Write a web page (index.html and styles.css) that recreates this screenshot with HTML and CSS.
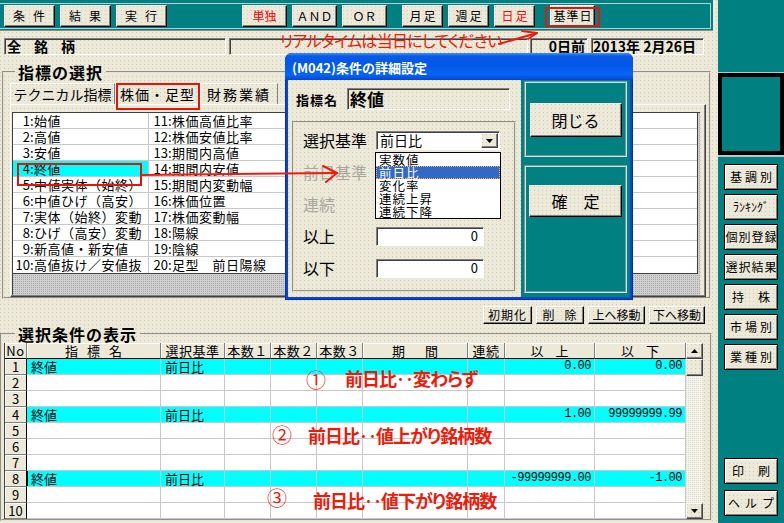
FILE: index.html
```html
<!DOCTYPE html>
<html lang="ja">
<head>
<meta charset="utf-8">
<title>条件の詳細設定</title>
<link rel="stylesheet" href="styles.css">
</head>
<body>
<div class="app">
  <div class="main tex">
    <div class="toolbar">
      <div class="tb-inner">
        <button class="btn tex tb">条件</button>
        <button class="btn tex tb">結果</button>
        <button class="btn tex tb">実行</button>
        <button class="btn tex tb2 red ml-a">単独</button>
        <button class="btn tex tb2">ＡＮＤ</button>
        <button class="btn tex tb2">ＯＲ</button>
        <button class="btn tex tb3 ml-b">月足</button>
        <button class="btn tex tb3">週足</button>
        <button class="btn tex tb3 red">日足</button>
        <button class="btn tex tb4 ml-c kijun">基準日</button>
      </div>
    </div>
    <div class="inforow">
      <div class="field f-all">全銘柄</div>
      <div class="field f-blank"></div>
      <div class="field f-days">0日前</div>
      <div class="field f-date">2013年 2月26日</div>
    </div>
    <fieldset class="grp grp1">
      <legend>指標の選択</legend>
      <div class="tabs">
        <div class="tab t1">テクニカル指標</div>
        <div class="tab t2">株価・足型</div>
        <div class="tab t3">財務業績</div>
      </div>
      <div class="tabpanel">
        <div class="listbox hatch">
          <div class="lrows">
            <div class="lrow"><div class="lc"><span class="n">1</span>:始値</div><div class="lc c2"><span class="n">11</span>:株価高値比率</div><div class="lc c3"></div></div>
            <div class="lrow"><div class="lc"><span class="n">2</span>:高値</div><div class="lc c2"><span class="n">12</span>:株価安値比率</div><div class="lc c3"></div></div>
            <div class="lrow"><div class="lc"><span class="n">3</span>:安値</div><div class="lc c2"><span class="n">13</span>:期間内高値</div><div class="lc c3"></div></div>
            <div class="lrow"><div class="lc sel"><span class="n">4</span>:終値</div><div class="lc c2"><span class="n">14</span>:期間内安値</div><div class="lc c3"></div></div>
            <div class="lrow"><div class="lc"><span class="n">5</span>:中値実体（始終）</div><div class="lc c2"><span class="n">15</span>:期間内変動幅</div><div class="lc c3"></div></div>
            <div class="lrow"><div class="lc"><span class="n">6</span>:中値ひげ（高安）</div><div class="lc c2"><span class="n">16</span>:株価位置</div><div class="lc c3"></div></div>
            <div class="lrow"><div class="lc"><span class="n">7</span>:実体（始終）変動</div><div class="lc c2"><span class="n">17</span>:株価変動幅</div><div class="lc c3"></div></div>
            <div class="lrow"><div class="lc"><span class="n">8</span>:ひげ（高安）変動</div><div class="lc c2"><span class="n">18</span>:陽線</div><div class="lc c3"></div></div>
            <div class="lrow"><div class="lc"><span class="n">9</span>:新高値・新安値</div><div class="lc c2"><span class="n">19</span>:陰線</div><div class="lc c3"></div></div>
            <div class="lrow"><div class="lc"><span class="n">10</span>:高値抜け／安値抜</div><div class="lc c2"><span class="n">20</span>:足型　前日陽線</div><div class="lc c3"></div></div>
          </div>
        </div>
      </div>
    </fieldset>
    <div class="btnrow">
      <button class="btn tex rb w1">初期化</button>
      <button class="btn tex rb w2">削除</button>
      <button class="btn tex rb w3">上へ移動</button>
      <button class="btn tex rb w4">下へ移動</button>
    </div>
    <fieldset class="grp grp2">
      <legend>選択条件の表示</legend>
      <div class="tablewrap">
        <div class="tbl">
          <div class="tr th">
            <div class="tex">No</div><div class="tex sp8">指標名</div><div class="tex">選択基準</div><div class="tex">本数１</div><div class="tex">本数２</div><div class="tex">本数３</div><div class="tex sp16">期間</div><div class="tex">連続</div><div class="tex sp12">以上</div><div class="tex sp12">以下</div>
          </div>
          <div class="tr cy"><div class="no tex">1</div><div>終値</div><div>前日比</div><div></div><div></div><div></div><div></div><div></div><div class="num">0.00</div><div class="num">0.00</div></div>
          <div class="tr"><div class="no tex">2</div><div></div><div></div><div></div><div></div><div></div><div></div><div></div><div></div><div></div></div>
          <div class="tr"><div class="no tex">3</div><div></div><div></div><div></div><div></div><div></div><div></div><div></div><div></div><div></div></div>
          <div class="tr cy"><div class="no tex">4</div><div>終値</div><div>前日比</div><div></div><div></div><div></div><div></div><div></div><div class="num">1.00</div><div class="num">99999999.99</div></div>
          <div class="tr"><div class="no tex">5</div><div></div><div></div><div></div><div></div><div></div><div></div><div></div><div></div><div></div></div>
          <div class="tr"><div class="no tex">6</div><div></div><div></div><div></div><div></div><div></div><div></div><div></div><div></div><div></div></div>
          <div class="tr"><div class="no tex">7</div><div></div><div></div><div></div><div></div><div></div><div></div><div></div><div></div><div></div></div>
          <div class="tr cy"><div class="no tex">8</div><div class="cur">終値</div><div>前日比</div><div></div><div></div><div></div><div></div><div></div><div class="num">-99999999.00</div><div class="num">-1.00</div></div>
          <div class="tr"><div class="no tex">9</div><div></div><div></div><div></div><div></div><div></div><div></div><div></div><div></div><div></div></div>
          <div class="tr"><div class="no tex">10</div><div></div><div></div><div></div><div></div><div></div><div></div><div></div><div></div><div></div></div>
        </div>
        <div class="vscroll">
          <div class="sbb tex"><svg width="7" height="4" viewBox="0 0 7 4"><polygon points="3.5,0 7,4 0,4" fill="#000"/></svg></div>
          <div class="sbthumb tex"></div>
          <div class="sbtrack"></div>
          <div class="sbb tex"><svg width="7" height="4" viewBox="0 0 7 4"><polygon points="0,0 7,0 3.5,4" fill="#000"/></svg></div>
        </div>
      </div>
    </fieldset>
  </div>

  <div class="side">
    <div class="side-top"></div>
    <div class="blackbox"></div>
    <div class="side-line"></div>
    <div class="side-btns">
      <button class="btn tex sbtn s3">基調別</button>
      <button class="btn tex sbtn sk">ﾗﾝｷﾝｸﾞ</button>
      <button class="btn tex sbtn s4">個別登録</button>
      <button class="btn tex sbtn s4">選択結果</button>
      <button class="btn tex sbtn s2">持株</button>
      <button class="btn tex sbtn s3">市場別</button>
      <button class="btn tex sbtn s3">業種別</button>
      <button class="btn tex sbtn s2 push">印刷</button>
      <button class="btn tex sbtn s3 last">ヘルプ</button>
    </div>
  </div>

  <div class="dialog">
    <div class="dtitle">(M042)条件の詳細設定</div>
    <div class="dbody">
      <div class="dleft tex">
        <div class="namerow">
          <span class="namelbl">指標名</span>
          <div class="namefield">終値</div>
        </div>
        <div class="dgroup">
          <span class="dl">選択基準</span>
          <div class="select"><span class="seltext">前日比</span><span class="ddbtn tex"><svg width="7" height="4" viewBox="0 0 7 4"><polygon points="0,0 7,0 3.5,4" fill="#000"/></svg></span></div>
          <span class="dl dis">前日基準</span><span></span>
          <span class="dl dis">連続</span><span></span>
          <span class="dl">以上</span><div class="numin">0</div>
          <span class="dl">以下</span><div class="numin">0</div>
        </div>
      </div>
      <div class="dright">
        <div class="frame f1"><button class="btn tex bigbtn b1">閉じる</button></div>
        <div class="frame f2"><button class="btn tex bigbtn b2">確定</button></div>
      </div>
    </div>
    <ul class="ddlist">
      <li>実数値</li>
      <li class="on">前日比</li>
      <li>変化率</li>
      <li>連続上昇</li>
      <li>連続下降</li>
    </ul>
  </div>

  <div class="note">リアルタイムは当日にしてください</div>
  <div class="circ c1">①</div><div class="ann a1">前日比‥変わらず</div>
  <div class="circ c2n">②</div><div class="ann a2">前日比‥値上がり銘柄数</div>
  <div class="circ c3n">③</div><div class="ann a3">前日比‥値下がり銘柄数</div>

  <svg class="arrows" width="784" height="523" viewBox="0 0 784 523">
    <g stroke="#ee1c0e" stroke-width="2" fill="none" stroke-linecap="round" stroke-linejoin="round">
      <line x1="499" y1="44" x2="537" y2="33"/>
      <polyline points="522,31 537,33 528,39"/>
      <line x1="142" y1="175" x2="337" y2="173"/>
      <polyline points="323,166 337,173 326,182"/>
    </g>
  </svg>
</div>
</body>
</html>
```

FILE: styles.css
```css
* { box-sizing: border-box; }
html, body { margin: 0; padding: 0; }
body {
  width: 784px; height: 523px; overflow: hidden;
  font-family: "Noto Sans CJK JP", "Noto Sans", sans-serif;
  font-size: 13px; color: #000; background: #ece9d8;
}
.tex {
  background-color: #ece9d8;
  background-image: conic-gradient(at 1px 1px, transparent 75%, #cfcbb8 0);
  background-size: 4px 4px;
}
.hatch {
  background-color: #d0d0d0;
  background-image: conic-gradient(at 1px 1px, transparent 75%, #a8a8a8 0);
  background-size: 2px 2px;
}
.app { position: relative; display: flex; width: 784px; height: 523px; overflow: hidden; }
.main { width: 718px; height: 523px; display: flex; flex-direction: column; flex: none; }

/* toolbar */
.toolbar { width: 713px; height: 31px; flex: none; background: #008080; padding-top: 3px; border-bottom: 1px solid #8c8c8c; }
.tb-inner { width: 711px; height: 26px; border: 1px solid #b4d2d2; border-left: 0; display: flex; align-items: flex-start; gap: 5px; padding: 1px 0 0 4px; }
.btn {
  font-family: inherit; font-size: 12px; line-height: 1; color: #000;
  border: 1px solid; border-color: #fff #000 #000 #fff;
  box-shadow: inset -1px -1px 0 #808080;
  display: flex; align-items: center; justify-content: center;
  padding: 0; margin: 0; white-space: nowrap; flex: none;
}
.red { color: #f00; }
.tb { width: 51px; height: 22px; letter-spacing: 8px; padding-left: 7px; }
.tb2 { width: 45px; height: 22px; }
.tb3 { width: 41px; height: 22px; letter-spacing: 2px; padding-left: 2px; }
.tb4 { width: 45px; height: 22px; letter-spacing: 1px; padding-left: 1px; }
.ml-a { margin-left: 70px; }
.ml-b { margin-left: 10px; }
.ml-c { margin-left: 10px; }
.kijun { position: relative; }
.kijun::after { content: ""; position: absolute; left: -6px; right: -6px; top: 1px; bottom: -1px; border: 2px solid #e8140a; }

/* info row */
.inforow { height: 29px; flex: none; display: flex; padding: 7px 0 0 4px; }
.field {
  height: 17px; border: 1px solid; border-color: #808080 #fff #fff #808080;
  box-shadow: inset 1px 1px 0 #404040;
  font-weight: 700; font-size: 14px; line-height: 15px; white-space: nowrap;
}
.f-all { width: 222px; padding-left: 2px; letter-spacing: 13px; }
.f-blank { width: 299px; margin-left: 3px; }
.f-days { width: 58px; margin-left: 2px; text-align: right; padding-right: 2px; }
.f-date { width: 113px; margin-left: 3px; padding-left: 1px; }

/* group boxes */
.grp { border: 2px groove #e6e3d4; margin: 0; padding: 0; min-width: 0; flex: none; }
.grp legend { font-size: 16px; font-weight: 700; letter-spacing: 1px; padding: 0 3px; }
.grp1 { margin: 2px 0 0 2px; width: 709px; padding: 0 0 0 6px; }
.grp1 legend { line-height: 20px; margin-left: 5px; }

.tabs { display: flex; height: 21px; margin-top: 1px; }
.tab {
  height: 21px; font-size: 14px; line-height: 20px; text-align: center; white-space: nowrap;
  border-top: 1px solid #fff; border-left: 1px solid #fff; border-right: 1px solid #808080;
}
.t1 { width: 105px; }
.t2 { width: 85px; position: relative; letter-spacing: 1px; }
.t3 { width: 78px; letter-spacing: 2px; }
.t2::after { content: ""; position: absolute; left: 0; top: -1px; right: -1px; bottom: -6px; border: 2px solid #e8140a; }

.tabpanel {
  width: 696px; height: 193px; border: 1px solid; border-color: #fff #404040 #404040 #fff;
  box-shadow: inset -1px -1px 0 #808080; padding: 7px 0 0 1px;
}
.listbox { width: 688px; height: 183px; border-left: 1px solid #404040; border-top: 1px solid #404040; }
.lrows { width: 685px; height: 161px; background: #fff; border-right: 1px solid #404040; border-bottom: 1px solid #404040; }
.lrow { display: grid; grid-template-columns: 136px 139px 1fr; height: 16px; border-bottom: 1px solid #c8c8c8; }
.lrow:last-child { border-bottom: 0; height: 16px; }
.lc { font-size: 13px; letter-spacing: 0.5px; line-height: 15px; white-space: nowrap; padding-left: 2px; border-right: 1px solid #c8c8c8; }
.lc.c2 { padding-left: 4px; }
.lc.c3 { border-right: 0; }
.n { display: inline-block; width: 15px; text-align: right; letter-spacing: 0; }
.lc.sel { background: #0ff; position: relative; }
.lc.sel::after { content: ""; position: absolute; left: 4px; top: 2px; width: 121px; height: 19px; border: 2px solid #e8140a; }

/* button row */
.btnrow { height: 27px; flex: none; display: flex; justify-content: flex-end; gap: 4px; padding: 7px 13px 0 0; }
.rb { height: 18px; font-size: 12px; }
.w1 { width: 49px; letter-spacing: 1px; }
.w2 { width: 48px; letter-spacing: 10px; padding-left: 9px; }
.w3 { width: 57px; }
.w4 { width: 56px; }

/* lower group */
.grp2 { width: 712px; padding: 1px 0 0 2px; }
.grp2 legend { line-height: 16px; margin-left: 11px; }
.tablewrap { display: flex; width: 699px; height: 176px; }
.tbl { width: 682px; border-left: 1px solid #404040; }
.tr { display: grid; grid-template-columns: 22px 134px 64px 46px 46px 46px 105px 37px 90px 91px; height: 16px; }
.tr > div {
  border-right: 1px solid #c8c8c8; border-bottom: 1px solid #c8c8c8;
  font-size: 13px; line-height: 15px; padding: 0 4px; white-space: nowrap; background: #fff;
}
.tr.cy > div { background: #0ff; }
.tr > div.no {
  text-align: center; padding: 0; border-right: 1px solid #000; border-bottom: 1px solid #808080;
  box-shadow: inset 1px 1px 0 #fff; background-color: #ece9d8;
}
.tr.th > div {
  text-align: center; padding: 0; border-right: 1px solid #808080; border-bottom: 1px solid #000;
  box-shadow: inset 1px 1px 0 #fff; background-color: #ece9d8; letter-spacing: 0.5px;
}
.tr.th > div.sp8 { letter-spacing: 9px; padding-left: 9px; }
.tr.th > div.sp16 { letter-spacing: 20px; padding-left: 20px; }
.tr.th > div.sp12 { letter-spacing: 12px; padding-left: 12px; }
.tr > div.num { text-align: right; font-family: "Liberation Mono", monospace; font-size: 12px; letter-spacing: -0.5px; padding-right: 3px; }
.tr > div.cur { box-shadow: inset 1px 0 0 #000; }

.vscroll { width: 17px; height: 176px; display: flex; flex-direction: column; }
.sbb {
  height: 16px; flex: none; display: flex; align-items: center; justify-content: center;
  border: 1px solid; border-color: #fff #404040 #404040 #fff; box-shadow: inset -1px -1px 0 #808080;
}
.sbthumb { height: 17px; flex: none; border: 1px solid; border-color: #fff #404040 #404040 #fff; box-shadow: inset -1px -1px 0 #808080; }
.sbtrack {
  flex: 1; background-color: #f4f3ec;
  background-image: conic-gradient(at 1px 1px, transparent 75%, #dcd9c8 0); background-size: 2px 2px;
}

/* side */
.side { width: 66px; height: 523px; background: #008080; display: flex; flex-direction: column; flex: none; }
.side-top { height: 73px; flex: none; border-bottom: 1px solid #b8c8c8; }
.blackbox { height: 82px; flex: none; border: 4px solid #000; background: #008080; }
.side-line { height: 2px; flex: none; background: #c4c4c4; }
.side-btns { flex: 1; display: flex; flex-direction: column; gap: 4px; padding: 7px 0 7px 6px; }
.sbtn {
  width: 54px; height: 26px; font-size: 12px;
  border: 1px solid #000; box-shadow: inset 1px 1px 0 #fff, inset -1px -1px 0 #808080;
}
.s3 { letter-spacing: 3px; padding-left: 3px; }
.s4 { letter-spacing: 1px; padding-left: 1px; }
.s2 { letter-spacing: 14px; padding-left: 14px; }
.sk { letter-spacing: 0; }
.push { margin-top: auto; }
.last { margin-top: 2px; letter-spacing: 5px; padding-left: 5px; }

/* dialog */
.dialog {
  position: absolute; left: 285px; top: 53px; width: 348px; height: 247px;
  background: #0845d2; border-radius: 7px 7px 0 0; padding: 0 3px 3px;
  display: flex; flex-direction: column;
  box-shadow: inset 1px 0 0 #0031a8, inset -1px 0 0 #0031a8, inset 0 -1px 0 #0031a8;
}
.dtitle {
  height: 27px; flex: none; margin: 0 -3px; padding: 7px 0 0 7px; border-radius: 7px 7px 0 0;
  background: linear-gradient(180deg, #3d95ff 0, #0a5ae6 3px, #0057e8 45%, #0866f4 80%, #0346d6 100%);
  color: #fff; font-weight: 700; font-size: 13px; line-height: 15px; white-space: nowrap;
}
.dbody { flex: 1; display: flex; }
.dleft { width: 233px; flex: none; }
.namerow { display: flex; align-items: center; height: 30px; padding: 8px 0 0 8px; }
.namelbl { width: 51px; flex: none; font-weight: 700; font-size: 13px; letter-spacing: 1px; }
.namefield {
  width: 163px; height: 22px; border: 1px solid; border-color: #808080 #fff #fff #808080;
  box-shadow: inset 1px 1px 0 #404040; font-weight: 700; font-size: 17px; line-height: 20px; padding-left: 2px;
}
.dgroup {
  margin: 11px 0 0 4px; width: 224px; height: 171px; border: 2px groove #e6e3d4;
  display: grid; grid-template-columns: 73px 124px; grid-auto-rows: 19px; row-gap: 13px;
  padding: 8px 0 0 9px; align-items: center;
}
.dl { font-size: 16px; line-height: 19px; white-space: nowrap; }
.dis { color: #a9a79c; }
.select {
  width: 124px; height: 19px; background: #fff; border: 1px solid; border-color: #808080 #fff #fff #808080;
  box-shadow: inset 1px 1px 0 #404040; display: flex; align-items: center; padding: 1px 1px 1px 3px;
}
.seltext { font-size: 14px; line-height: 15px; flex: 1; }
.ddbtn {
  width: 17px; height: 15px; display: flex; align-items: center; justify-content: center;
  border: 1px solid; border-color: #fff #404040 #404040 #fff; box-shadow: inset -1px -1px 0 #808080;
}
.numin {
  width: 108px; height: 19px; background: #fff; border: 1px solid; border-color: #808080 #fff #fff #808080;
  box-shadow: inset 1px 1px 0 #404040; text-align: right; padding-right: 5px; font-size: 13px; line-height: 16px;
}
.dright { width: 109px; flex: none; background: #008080; padding: 1px 3px 0; display: flex; flex-direction: column; gap: 8px; }
.frame { border: 2px groove #cfe4e4; }
.f1 { height: 76px; padding-top: 20px; }
.f2 { height: 128px; padding-top: 18px; }
.bigbtn { font-size: 16px; margin: 0 auto; }
.b1 { width: 92px; height: 34px; }
.b2 { width: 93px; height: 32px; letter-spacing: 16px; padding-left: 16px; }
.ddlist {
  position: absolute; left: 90px; top: 99px; width: 126px; margin: 0; padding: 0; list-style: none;
  background: #fff; border: 1px solid #000; font-size: 12.5px; line-height: 13px; letter-spacing: 1px;
}
.ddlist li { height: 13px; padding-left: 3px; white-space: nowrap; }
.ddlist li.on { background: #316ac5; color: #fff; outline: 1px dotted #f0b060; outline-offset: -1px; }

/* annotations */
.note {
  position: absolute; left: 280px; top: 31px; color: #f01a0a; font-size: 16px; line-height: 18px;
  font-feature-settings: "palt"; letter-spacing: -0.7px; white-space: nowrap;
}
.circ { position: absolute; color: #f01a0a; font-size: 20px; line-height: 20px; }
.ann { position: absolute; color: #f01a0a; font-size: 18px; line-height: 20px; font-weight: 700; font-feature-settings: "palt"; letter-spacing: -1px; white-space: nowrap; }
.c1 { left: 306px; top: 370px; }
.a1 { left: 345px; top: 368px; }
.c2n { left: 272px; top: 425px; }
.a2 { left: 308px; top: 425px; }
.c3n { left: 267px; top: 488px; }
.a3 { left: 313px; top: 490px; }
.arrows { position: absolute; left: 0; top: 0; pointer-events: none; }
```
